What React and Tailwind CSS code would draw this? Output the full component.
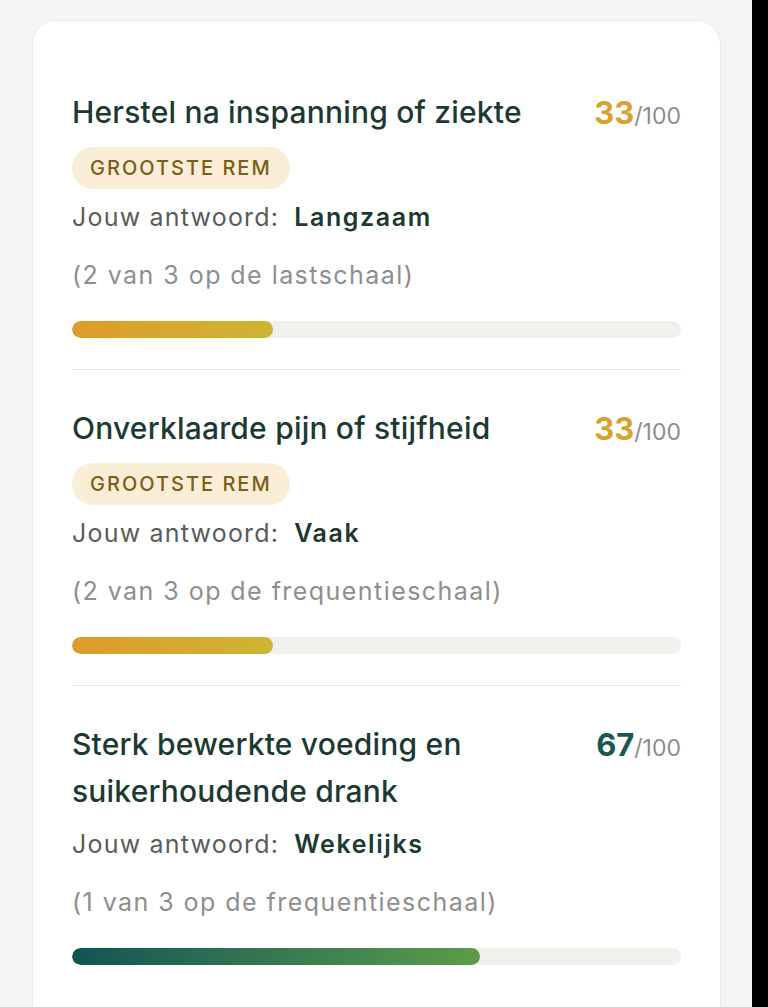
const items = [
  {
    title: 'Herstel na inspanning of ziekte',
    score: 33,
    badge: true,
    answer: 'Langzaam',
    scale: '(2 van 3 op de lastschaal)',
    tone: 'gold',
  },
  {
    title: 'Onverklaarde pijn of stijfheid',
    score: 33,
    badge: true,
    answer: 'Vaak',
    scale: '(2 van 3 op de frequentieschaal)',
    tone: 'gold',
  },
  {
    title: 'Sterk bewerkte voeding en suikerhoudende drank',
    score: 67,
    badge: false,
    answer: 'Wekelijks',
    scale: '(1 van 3 op de frequentieschaal)',
    tone: 'green',
  },
]

const ScoreItem = ({ item, first }) => {
  const gold = item.tone === 'gold'
  return (
    <div className={`pt-[35px] pb-[31px] ${first ? '' : 'border-t border-[#e9e9e6]'}`}>
      <div className="flex items-start justify-between gap-6">
        <h3 className="text-[30px] leading-[47px] font-medium tracking-[0.2px] text-[#1c3a32]">{item.title}</h3>
        <div className="flex items-baseline h-[47px] leading-[47px] shrink-0 overflow-visible">
          <span className={`text-[31px] font-bold ${gold ? 'text-[#d8a22c]' : 'text-[#17594f]'}`}>
            {item.score}
          </span>
          <span className="text-[23px] text-[#8d8d8b]">/100</span>
        </div>
      </div>

      {item.badge && (
        <div className="mt-[11px] flex w-fit items-center h-[42px] px-[18px] rounded-full bg-[#fbeed7] text-[20px] font-medium tracking-[2px] text-[#7f5c18]">
          GROOTSTE REM
        </div>
      )}

      <p className={`${item.badge ? 'mt-[11px]' : 'mt-[12px]'} h-[34px] text-[25px] leading-[34px] tracking-[1.2px] text-[#5b5b59]`}>
        Jouw antwoord:
        <span className="ml-[15px] font-semibold tracking-[1.6px] text-[#1c3a32]">{item.answer}</span>
      </p>

      <p className="mt-[24px] h-[34px] text-[25px] leading-[34px] tracking-[1.45px] text-[#8e8e8c]">{item.scale}</p>

      <div className="mt-[29px] h-[17px] rounded-full bg-[#f0f0ed] overflow-hidden">
        <div
          className={`h-full rounded-full ${
            gold
              ? 'bg-gradient-to-r from-[#de9b2b] to-[#cdb532]'
              : 'bg-gradient-to-r from-[#0f5553] to-[#5c9c48]'
          }`}
          style={{ width: `${item.score}%` }}
        />
      </div>
    </div>
  )
}

export default function App() {
  return (
    <div className="flex h-[1007px] overflow-hidden bg-[#f4f5f3]" style={{ fontFamily: 'Inter, "Noto Sans", sans-serif' }}>
      <div className="flex-1">
        <div className="ml-8 mt-5 w-[689px] min-h-[1100px] bg-white border border-[#ebebe8] rounded-t-[24px] px-[39px] pt-[33px]">
          {items.map((item, i) => (
            <ScoreItem key={item.title} item={item} first={i === 0} />
          ))}
        </div>
      </div>
      <div className="w-4 bg-black" />
    </div>
  )
}
